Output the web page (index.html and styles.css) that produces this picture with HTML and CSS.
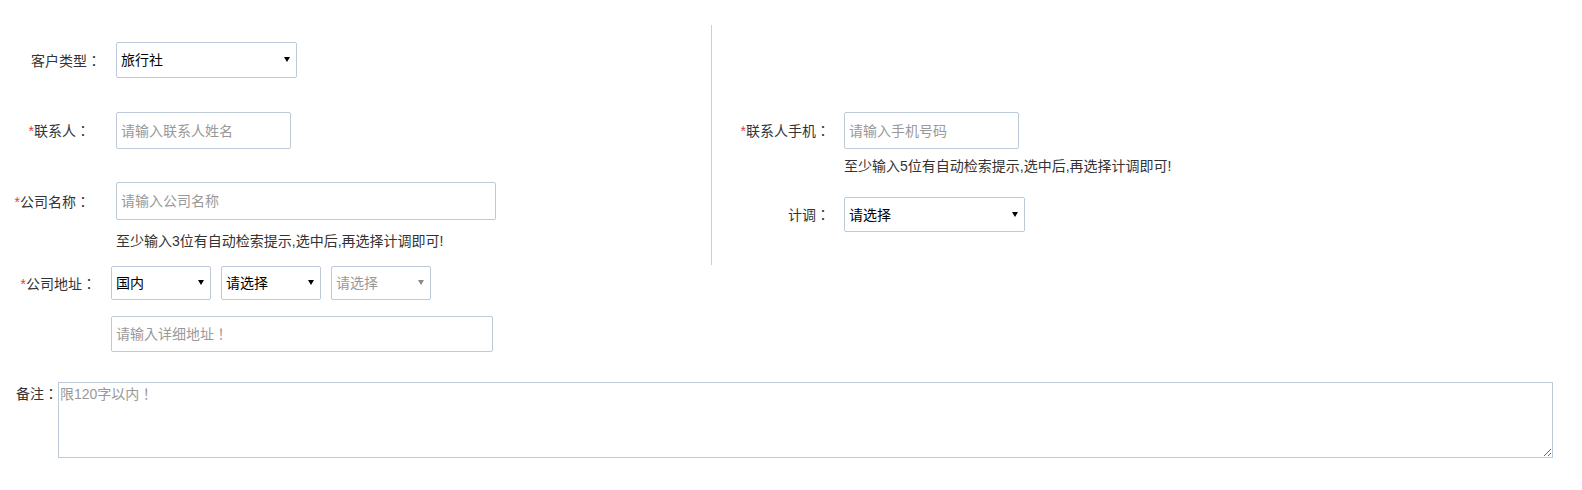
FILE: index.html
```html
<!DOCTYPE html>
<html lang="zh-CN">
<head>
<meta charset="utf-8">
<title>客户信息</title>
<link rel="stylesheet" href="styles.css">
</head>
<body>
<form class="form">
  <div class="top">
    <div class="col-left">
      <div class="row row-type">
        <label class="lbl lbl-type">客户类型<span class="colon" lang="zh-TW">：</span></label>
        <span class="sel-wrap w181"><select class="sel h36"><option>旅行社</option></select></span>
      </div>
      <div class="row row-contact">
        <label class="lbl lbl-contact"><span class="req">*</span>联系人<span class="colon" lang="zh-TW">：</span></label>
        <input class="inp w175 h37" type="text" placeholder="请输入联系人姓名">
      </div>
      <div class="row row-company">
        <label class="lbl lbl-contact"><span class="req">*</span>公司名称<span class="colon" lang="zh-TW">：</span></label>
        <input class="inp w380 h38" type="text" placeholder="请输入公司名称">
      </div>
      <p class="hint hint-company">至少输入3位有自动检索提示,选中后,再选择计调即可!</p>
      <div class="row row-addr">
        <label class="lbl lbl-addr"><span class="req">*</span>公司地址<span class="colon" lang="zh-TW">：</span></label>
        <div class="sel-group">
          <span class="sel-wrap w100"><select class="sel h34"><option>国内</option></select></span>
          <span class="sel-wrap w100"><select class="sel h34"><option>请选择</option></select></span>
          <span class="sel-wrap w100 is-disabled"><select class="sel h34" disabled><option>请选择</option></select></span>
        </div>
      </div>
      <div class="row row-detail">
        <input class="inp inp-punct w382 h36" type="text" lang="zh-TW" placeholder="请输入详细地址！">
      </div>
    </div>
    <div class="col-right">
      <div class="row row-phone">
        <label class="lbl lbl-right"><span class="req">*</span>联系人手机<span class="colon" lang="zh-TW">：</span></label>
        <input class="inp w175 h37" type="text" placeholder="请输入手机号码">
      </div>
      <p class="hint hint-phone">至少输入5位有自动检索提示,选中后,再选择计调即可!</p>
      <div class="row row-op">
        <label class="lbl lbl-right">计调<span class="colon" lang="zh-TW">：</span></label>
        <span class="sel-wrap w181"><select class="sel h35"><option>请选择</option></select></span>
      </div>
    </div>
  </div>
  <div class="row row-note">
    <label class="lbl-note">备注<span class="colon" lang="zh-TW">：</span></label>
    <textarea class="note" lang="zh-TW" placeholder="限120字以内！"></textarea>
  </div>
</form>
</body>
</html>
```

FILE: styles.css
```css
* { box-sizing: border-box; }

body {
  margin: 0;
  background: #fff;
  color: #333;
  font-family: "Liberation Sans", "Noto Sans CJK SC", sans-serif;
  font-size: 14px;
  line-height: 20px;
}

.form { margin: 0; }

.top {
  display: flex;
  align-items: flex-start;
}

.col-left {
  width: 711px;
  flex: none;
}

.col-right {
  border-left: 1px solid #c3d1df;
  margin-top: 25px;
  padding-top: 87px;
  padding-bottom: 33px;
  width: 600px;
}

.row {
  display: flex;
  align-items: center;
}

.row-type { margin-top: 42px; }
.row-contact { margin-top: 34px; }
.row-company { margin-top: 33px; }
.row-addr { margin-top: 15px; }
.row-detail { margin-top: 16px; padding-left: 111px; }
.row-op { margin-top: 21px; }

.row-note {
  margin-top: 30px;
  align-items: flex-start;
}

.lbl {
  flex: none;
  text-align: right;
  white-space: nowrap;
  color: #333;
}

.colon {
  font-family: "Noto Sans CJK TC", sans-serif;
}

.lbl-type { width: 116px; padding-right: 15px; }
.lbl-contact { width: 116px; padding-right: 26px; }
.lbl-addr { width: 111px; padding-right: 15px; }
.lbl-right { width: 132px; padding-right: 14px; }

.req {
  color: #e4393c;
}

.hint {
  margin: 0;
  color: #333;
  white-space: nowrap;
}

.hint-company { margin-top: 11px; padding-left: 116px; }
.hint-phone { margin-top: 7px; padding-left: 132px; }

.inp,
.sel,
.note {
  font-family: inherit;
  font-size: 14px;
  border: 1px solid #bccad8;
  border-radius: 2px;
  background: #fff;
  outline: none;
}

.inp {
  padding: 0 4px;
  color: #333;
}

.inp::placeholder,
.note::placeholder {
  color: #999;
}

.sel-wrap {
  position: relative;
  display: inline-block;
  flex: none;
}

.sel-wrap::after {
  content: "";
  position: absolute;
  right: 7px;
  top: 50%;
  margin-top: -3px;
  border-left: 3px solid transparent;
  border-right: 3px solid transparent;
  border-top: 5px solid #000;
  pointer-events: none;
}

.sel-wrap.is-disabled::after {
  border-top-color: #888;
}

.sel {
  -webkit-appearance: none;
  appearance: none;
  width: 100%;
  padding: 0 16px 0 4px;
  color: #000;
  display: block;
}

.sel:disabled {
  color: #999;
  background: #fff;
  opacity: 1;
}

.sel-group {
  display: flex;
  gap: 10px;
}

.w100 { width: 100px; }
.w175 { width: 175px; }
.w181 { width: 181px; }
.w380 { width: 380px; }
.w382 { width: 382px; }

.h34 { height: 34px; }
.h35 { height: 35px; }
.h36 { height: 36px; }
.h37 { height: 37px; }
.h38 { height: 38px; }

.lbl-note {
  width: 58px;
  padding-left: 16px;
  margin-top: 1px;
  flex: none;
  white-space: nowrap;
}

.note {
  width: 1495px;
  height: 76px;
  padding: 1px 1px;
  border-radius: 0;
  color: #333;
  line-height: 20px;
}
```
